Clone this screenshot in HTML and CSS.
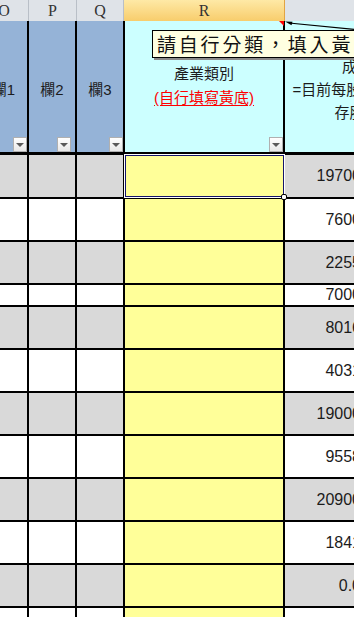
FILE: index.html
```html
<!DOCTYPE html>
<html lang="zh-Hant">
<head>
    <meta charset="UTF-8" />
    <meta name="viewport" content="width=device-width, initial-scale=1" />
    <title>產業類別</title>
    <link rel="stylesheet" href="styles.css">
</head>
<body>
    <div class="sheet">
        <div class="grid">
            <!-- column letters -->
            <div class="colbar">
                <div class="ch ch-o">O</div>
                <div class="ch ch-p">P</div>
                <div class="ch ch-q">Q</div>
                <div class="ch ch-r">R</div>
                <div class="ch ch-s"></div>
            </div>

            <!-- table header row -->
            <div class="row head">
                <div class="cell c-o blue"><span>欄1</span><i class="filter"></i></div>
                <div class="cell c-p blue"><span>欄2</span><i class="filter gap"></i></div>
                <div class="cell c-q blue"><span>欄3</span><i class="filter"></i></div>
                <div class="cell c-r cyan">
                    <div class="title">
                        <span>產業類別</span>
                        <span class="hint">(自行填寫黃底)</span>
                    </div>
                    <i class="filter"></i>
                </div>
                <div class="cell c-s cyan">
                    <div class="title s-title">
                        <span>成本</span>
                        <span>=目前每股市價合計</span>
                        <span>存股數</span>
                    </div>
                </div>
            </div>

            <div class="row first grey">
                <div class="cell c-o"></div><div class="cell c-p"></div><div class="cell c-q"></div>
                <div class="cell c-r"></div><div class="cell c-s num">19700</div>
            </div>
            <div class="row">
                <div class="cell c-o"></div><div class="cell c-p"></div><div class="cell c-q"></div>
                <div class="cell c-r"></div><div class="cell c-s num">7600</div>
            </div>
            <div class="row grey">
                <div class="cell c-o"></div><div class="cell c-p"></div><div class="cell c-q"></div>
                <div class="cell c-r"></div><div class="cell c-s num">2255</div>
            </div>
            <div class="row short">
                <div class="cell c-o"></div><div class="cell c-p"></div><div class="cell c-q"></div>
                <div class="cell c-r"></div><div class="cell c-s num">7000</div>
            </div>
            <div class="row grey">
                <div class="cell c-o"></div><div class="cell c-p"></div><div class="cell c-q"></div>
                <div class="cell c-r"></div><div class="cell c-s num">8016</div>
            </div>
            <div class="row">
                <div class="cell c-o"></div><div class="cell c-p"></div><div class="cell c-q"></div>
                <div class="cell c-r"></div><div class="cell c-s num">4031</div>
            </div>
            <div class="row grey">
                <div class="cell c-o"></div><div class="cell c-p"></div><div class="cell c-q"></div>
                <div class="cell c-r"></div><div class="cell c-s num">19000</div>
            </div>
            <div class="row">
                <div class="cell c-o"></div><div class="cell c-p"></div><div class="cell c-q"></div>
                <div class="cell c-r"></div><div class="cell c-s num">9558</div>
            </div>
            <div class="row grey">
                <div class="cell c-o"></div><div class="cell c-p"></div><div class="cell c-q"></div>
                <div class="cell c-r"></div><div class="cell c-s num">20900</div>
            </div>
            <div class="row">
                <div class="cell c-o"></div><div class="cell c-p"></div><div class="cell c-q"></div>
                <div class="cell c-r"></div><div class="cell c-s num">1841</div>
            </div>
            <div class="row grey">
                <div class="cell c-o"></div><div class="cell c-p"></div><div class="cell c-q"></div>
                <div class="cell c-r"></div><div class="cell c-s num">0.0</div>
            </div>
            <div class="row">
                <div class="cell c-o"></div><div class="cell c-p"></div><div class="cell c-q"></div>
                <div class="cell c-r"></div><div class="cell c-s num">0.0</div>
            </div>
        </div>

        <!-- overlays: comment marker, comment, selection -->
        <div class="marker"></div>
        <svg class="arrow" width="80" height="20" viewBox="0 0 80 20">
            <line x1="9" y1="7" x2="80" y2="14" stroke="#000" stroke-width="1.2" />
            <polygon points="5,5.5 12.5,5.8 11.5,9.2" fill="#000" />
        </svg>
        <div class="comment">請自行分類，填入黃</div>
        <div class="selection"></div>
        <div class="handle"></div>
    </div>
</body>
</html>
```

FILE: styles.css
```css
body {
    margin: 0;
    background: #fff;
    font-family: "Liberation Sans", "Noto Sans CJK TC", sans-serif;
}
.sheet {
    position: relative;
    width: 354px;
    height: 617px;
    overflow: hidden;
}
.grid {
    margin-left: -20px;
    width: 469px;
}

/* column letters */
.colbar {
    display: flex;
    height: 21px;
    background: #dfe3e8;
}
.ch {
    box-sizing: border-box;
    height: 21px;
    border-right: 1px solid #b9bfc7;
    text-align: center;
    font: 16px/21px "Liberation Serif", serif;
    color: #333;
}
.ch-o { width: 49px; }
.ch-p { width: 48px; }
.ch-q { width: 47px; }
.ch-r {
    width: 161px;
    background: linear-gradient(#fee9a6, #f8cd6c);
    border-right-color: #e2a442;
}
.ch-s { width: 164px; border-right: none; }

/* rows */
.row {
    display: flex;
    box-sizing: border-box;
    height: 43px;
    border-bottom: 2px solid #000;
    background: #fff;
}
.row.grey { background: #d9d9d9; }
.row.first { height: 44px; }
.row.short { height: 22px; }
.row.head {
    height: 134px;
    border-bottom-width: 3px;
}
.cell {
    position: relative;
    box-sizing: border-box;
    border-right: 2px solid #000;
}
.c-o { width: 49px; }
.c-p { width: 48px; }
.c-q { width: 48px; }
.c-r { width: 160px; background: #ffff99; }
.c-s { width: 164px; border-right: none; }

.head .cell {
    display: flex;
    align-items: center;
    justify-content: center;
    padding-top: 4px;
    font-size: 15px;
    color: #1c1c1c;
}
.blue { background: #95b3d7; }
.head .cyan { background: #ccffff; }
.title {
    display: flex;
    flex-direction: column;
    align-items: center;
    line-height: 24px;
    margin-bottom: 6px;
}
.hint {
    color: #ff0000;
    text-decoration: underline;
    text-underline-offset: 2px;
}
.head .c-s {
    justify-content: flex-start;
}
.s-title {
    width: 144px;
    line-height: 23px;
    margin-bottom: 0;
    padding-top: 1px;
    white-space: nowrap;
}

/* autofilter buttons */
.filter {
    position: absolute;
    right: 0;
    bottom: 0;
    box-sizing: border-box;
    width: 14px;
    height: 15px;
    border: 1px solid #b0b0b0;
    background: linear-gradient(#ffffff, #e8e8e8);
}
.filter.gap { right: 4px; }
.filter::after {
    content: "";
    position: absolute;
    left: 2px;
    top: 5px;
    border-left: 4px solid transparent;
    border-right: 4px solid transparent;
    border-top: 4px solid #5a5a5a;
}

/* numbers */
.num {
    display: flex;
    align-items: center;
    justify-content: flex-end;
    padding-right: 88px;
    font-size: 16px;
    color: #1b1b1b;
}

/* overlays */
.marker {
    position: absolute;
    left: 279px;
    top: 21px;
    width: 0;
    height: 0;
    border-left: 5px solid transparent;
    border-top: 5px solid #ff0000;
}
.arrow {
    position: absolute;
    left: 280px;
    top: 16px;
}
.comment {
    position: absolute;
    left: 152px;
    top: 30px;
    box-sizing: border-box;
    width: 260px;
    height: 28px;
    padding-left: 4px;
    border: 1px solid #000;
    background: #ffffe1;
    box-shadow: 2px 2px 0 #8a8a8a;
    font: 19px/25px "Noto Sans CJK TC", sans-serif;
    letter-spacing: 2.8px;
    white-space: nowrap;
    color: #111;
}
.selection {
    position: absolute;
    left: 124px;
    top: 154px;
    box-sizing: border-box;
    width: 161px;
    height: 44px;
    border: 1px solid #fff;
    box-shadow: inset 0 0 0 1px #15156a;
}
.handle {
    position: absolute;
    left: 281px;
    top: 194px;
    box-sizing: border-box;
    width: 6px;
    height: 6px;
    border: 1px solid #000;
    border-radius: 2px;
    background: #fff;
}
```
